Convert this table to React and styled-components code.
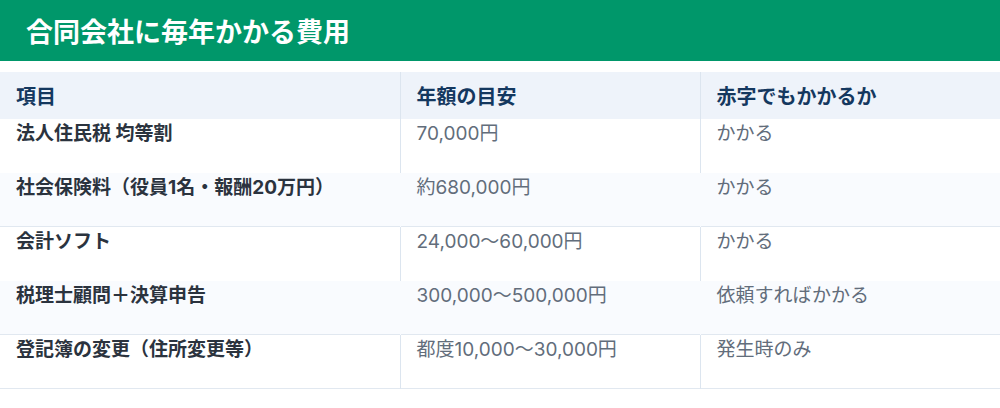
import React from 'react';
import styled, {createGlobalStyle} from 'styled-components';

const GlobalStyle = createGlobalStyle`
  html, body {
    margin: 0;
    padding: 0;
    background: #ffffff;
    font-family: Inter, "Noto Sans CJK JP", "Noto Sans", sans-serif;
  }
`;

const Page = styled.div({
  width: 1000,
  height: 408,
  background: '#ffffff',
  overflow: 'hidden',
});

const Title = styled.h2({
  margin: 0,
  height: 61,
  padding: '0 26px',
  display: 'flex',
  alignItems: 'center',
  background: '#00976a',
  color: '#ffffff',
  fontSize: 27,
  fontWeight: 700,
  letterSpacing: 0,
});

const Table = styled.table({
  width: '100%',
  marginTop: 11,
  borderCollapse: 'collapse',
  tableLayout: 'fixed',
});

const HeadCell = styled.th({
  height: 47,
  padding: '0 16px',
  background: '#eef3fa',
  color: '#14385f',
  fontSize: 20,
  fontWeight: 700,
  textAlign: 'left',
  borderRight: '1px solid #dce5ef',
  '&:last-child': {borderRight: 'none'},
});

const Row = styled.tr`
  background: ${p => (p.$striped ? '#f9fbfe' : '#ffffff')};
  border-bottom: 1px solid ${p => (p.$striped || p.$last ? '#e1e8f0' : 'transparent')};
`;

const Cell = styled.td`
  height: 53px;
  padding: 0 16px;
  vertical-align: top;
  font-size: 19px;
  line-height: 30px;
  color: ${p => (p.$label ? '#2b333e' : '#626d7b')};
  font-weight: ${p => (p.$label ? 700 : 400)};
  border-right: 1px solid ${p => (p.$striped ? 'transparent' : '#dce5ef')};
  &:last-child {
    border-right: none;
  }
`;

const costs = [
  {item: '法人住民税 均等割', amount: '70,000円', deficit: 'かかる'},
  {item: '社会保険料（役員1名・報酬20万円）', amount: '約680,000円', deficit: 'かかる'},
  {item: '会計ソフト', amount: '24,000〜60,000円', deficit: 'かかる'},
  {item: '税理士顧問＋決算申告', amount: '300,000〜500,000円', deficit: '依頼すればかかる'},
  {item: '登記簿の変更（住所変更等）', amount: '都度10,000〜30,000円', deficit: '発生時のみ'},
];

export default function App() {
  return (
    <Page>
      <GlobalStyle />
      <Title>合同会社に毎年かかる費用</Title>
      <Table>
        <colgroup>
          <col style={{width: 400}} />
          <col style={{width: 300}} />
          <col style={{width: 300}} />
        </colgroup>
        <thead>
          <tr>
            <HeadCell>項目</HeadCell>
            <HeadCell>年額の目安</HeadCell>
            <HeadCell>赤字でもかかるか</HeadCell>
          </tr>
        </thead>
        <tbody>
          {costs.map((c, i) => {
            const striped = i % 2 === 1;
            return (
              <Row key={c.item} $striped={striped} $last={i === costs.length - 1}>
                <Cell $label $striped={striped}>{c.item}</Cell>
                <Cell $striped={striped}>{c.amount}</Cell>
                <Cell $striped={striped}>{c.deficit}</Cell>
              </Row>
            );
          })}
        </tbody>
      </Table>
    </Page>
  );
}
